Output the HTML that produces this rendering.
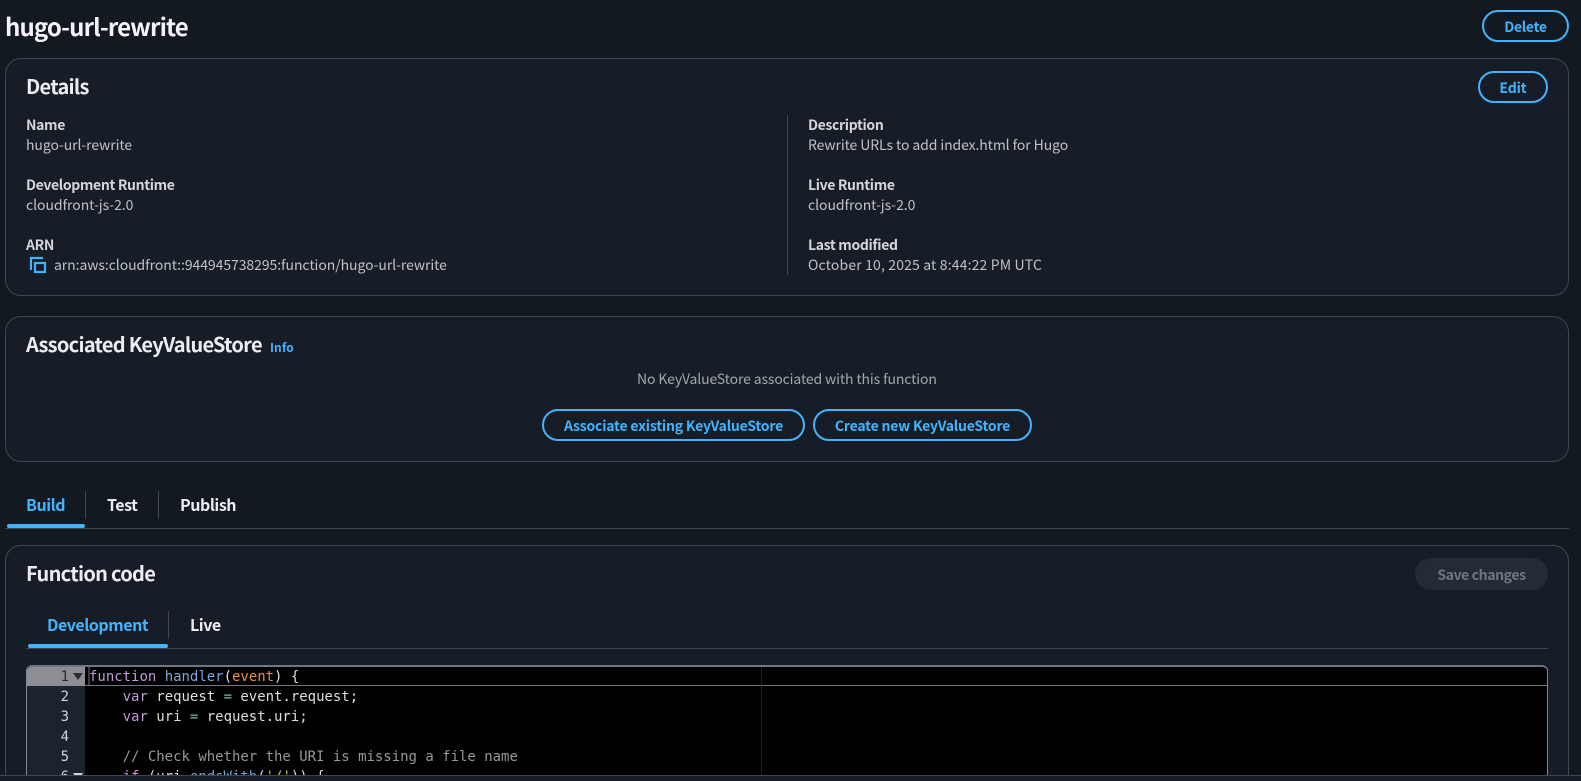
<!DOCTYPE html>
<html><head><meta charset="utf-8"><title>hugo-url-rewrite</title>
<style>
html,body{margin:0;padding:0;width:1581px;height:781px;overflow:hidden;background:#131920}
body{position:relative;font-family:"Noto Sans CJK JP","Liberation Sans",sans-serif;font-size:14px;color:#c6c6cd}
.t{position:absolute;white-space:pre;line-height:20px}
.card{position:absolute;left:5px;width:1562px;background:#161d26;border:1px solid #414750;border-radius:16px;box-sizing:content-box}
.h{font-size:20px;font-weight:700;color:#ececf1;line-height:24px;letter-spacing:-.72px}
.l{font-weight:700;color:#d5d5da;letter-spacing:-.35px}
.v{color:#c0c0c7;letter-spacing:-.08px}
.btn{position:absolute;box-sizing:border-box;height:32px;border:2px solid #42b4ff;border-radius:16px;color:#42b4ff;font-weight:700;text-align:center;line-height:30px;letter-spacing:-.2px;white-space:pre}
.tab{font-size:16px;font-weight:700;color:#ececf1;letter-spacing:-.45px}
.blue{color:#42b4ff}
.bar{position:absolute;background:#42b4ff;height:4px;border-radius:2px}
.vd{position:absolute;width:1px;background:#414750}
.hd{position:absolute;height:1px;background:#414750}
#ed{position:absolute;left:26px;top:665px;width:1522px;height:116px;background:#000;overflow:hidden;border-radius:6px 6px 0 0;box-sizing:border-box;border:1px solid #7d8998;border-top:2px solid #6f7680}
#gut{position:absolute;left:0;top:0;width:58px;height:120px;background:#1b232d}
#gact{position:absolute;left:0;top:0;width:58px;height:19px;background:#8d8d93}
#lact{position:absolute;left:58px;right:0;top:18px;height:1px;background:#6f7680}
#pm{position:absolute;left:734px;top:0;width:1px;height:120px;background:#222}
#cur{position:absolute;left:61px;top:0;width:2px;height:18px;background:#3a3a3a}
.c{position:absolute;left:62px;font:14px/20px "DejaVu Sans Mono",monospace;white-space:pre;color:#dedede;letter-spacing:-.02px}
.n{position:absolute;width:42px;left:0;text-align:right;font:14px/20px "DejaVu Sans Mono",monospace;color:#d1d5db}
.k{color:#c397d8}.f{color:#7aa6da}.p{color:#e78c45}.o{color:#70c0b1}.s{color:#b9ca4a}.m{color:#969896}
.tri{position:absolute;left:45.5px;width:0;height:0;border-left:5px solid transparent;border-right:5px solid transparent;border-top:7px solid #2e2e2e}
#foot{position:absolute;left:0;top:775px;width:1581px;height:6px;background:#161d26;border-top:1px solid #414750;box-sizing:border-box}
</style></head>
<body>
<div class="t" style="left:5px;top:11px;font-size:24px;line-height:30px;font-weight:700;color:#f3f3f7;letter-spacing:-.87px">hugo-url-rewrite</div>
<div class="btn" style="left:1482px;top:10px;width:87px;letter-spacing:-.3px">Delete</div>

<div class="card" style="top:58px;height:236px"></div>
<div class="t h" style="left:26px;top:74px">Details</div>
<div class="btn" style="left:1478px;top:71px;width:70px;letter-spacing:-.1px">Edit</div>
<div class="t l" style="left:26px;top:115px">Name</div>
<div class="t v" style="left:26px;top:135px">hugo-url-rewrite</div>
<div class="t l" style="left:26px;top:175px">Development Runtime</div>
<div class="t v" style="left:26px;top:195px;letter-spacing:-.05px">cloudfront-js-2.0</div>
<div class="t l" style="left:26px;top:235px">ARN</div>
<svg style="position:absolute;left:29px;top:256px" width="18" height="18" viewBox="0 0 18 18" fill="none" stroke="#42b4ff" stroke-width="2.2"><path d="M2 14V2h12"/><rect x="6" y="7" width="10" height="9"/></svg>
<div class="t v" style="left:54px;top:255px;letter-spacing:-.07px">arn:aws:cloudfront::944945738295:function/hugo-url-rewrite</div>
<div class="vd" style="left:787px;top:115px;height:160px"></div>
<div class="t l" style="left:808px;top:115px">Description</div>
<div class="t v" style="left:808px;top:135px;letter-spacing:-.1px">Rewrite URLs to add index.html for Hugo</div>
<div class="t l" style="left:808px;top:175px">Live Runtime</div>
<div class="t v" style="left:808px;top:195px;letter-spacing:-.05px">cloudfront-js-2.0</div>
<div class="t l" style="left:808px;top:235px">Last modified</div>
<div class="t v" style="left:808px;top:255px;letter-spacing:.15px">October 10, 2025 at 8:44:22 PM UTC</div>

<div class="card" style="top:316px;height:144px"></div>
<div class="t h" style="left:26px;top:332px">Associated KeyValueStore</div>
<div class="t blue" style="left:270px;top:338px;font-size:12px;font-weight:700;letter-spacing:.1px">Info</div>
<div class="t" style="left:637px;top:369px;color:#a3a7ad;letter-spacing:-.13px">No KeyValueStore associated with this function</div>
<div class="btn" style="left:542px;top:409px;width:263px">Associate existing KeyValueStore</div>
<div class="btn" style="left:813px;top:409px;width:219px">Create new KeyValueStore</div>

<div class="t tab blue" style="left:26px;top:494px">Build</div>
<div class="vd" style="left:85px;top:491px;height:28px"></div>
<div class="t tab" style="left:107px;top:494px">Test</div>
<div class="vd" style="left:158px;top:491px;height:28px"></div>
<div class="t tab" style="left:180px;top:494px">Publish</div>
<div class="bar" style="left:7px;top:524px;width:78px"></div>
<div class="hd" style="left:5px;top:528px;width:1564px"></div>

<div class="card" style="top:545px;height:260px"></div>
<div class="t h" style="left:26px;top:561px">Function code</div>
<div class="btn" style="left:1415px;top:558px;width:133px;background:#232b37;border-color:#232b37;color:#6f7680;letter-spacing:-.4px">Save changes</div>
<div class="t tab blue" style="left:47px;top:614px">Development</div>
<div class="vd" style="left:168px;top:611px;height:28px"></div>
<div class="t tab" style="left:190px;top:614px">Live</div>
<div class="bar" style="left:28px;top:644px;width:140px"></div>
<div class="hd" style="left:26px;top:648px;width:1522px"></div>

<div id="ed">
<div id="gut"></div><div id="gact"></div><div id="lact"></div><div id="pm"></div><div id="cur"></div>
<div class="n" style="top:0;color:#2a2a2a">1</div><div class="tri" style="top:6px"></div>
<div class="n" style="top:20px">2</div>
<div class="n" style="top:40px">3</div>
<div class="n" style="top:60px">4</div>
<div class="n" style="top:80px">5</div>
<div class="n" style="top:100px">6</div><div class="tri" style="top:106px;border-top-color:#d1d5db"></div>
<div class="c" style="top:0"><span class="k">function</span> <span class="f">handler</span>(<span class="p">event</span>) {</div>
<div class="c" style="top:20px">    <span class="k">var</span> request <span class="o">=</span> event.request;</div>
<div class="c" style="top:40px">    <span class="k">var</span> uri <span class="o">=</span> request.uri;</div>
<div class="c" style="top:80px">    <span class="m">// Check whether the URI is missing a file name</span></div>
<div class="c" style="top:100px">    <span class="k">if</span> (uri.<span class="f">endsWith</span>(<span class="s">'/'</span>)) {</div>
</div>
<div id="foot"></div>
<div class="vd" style="left:1568px;top:700px;height:75px"></div>
</body></html>
